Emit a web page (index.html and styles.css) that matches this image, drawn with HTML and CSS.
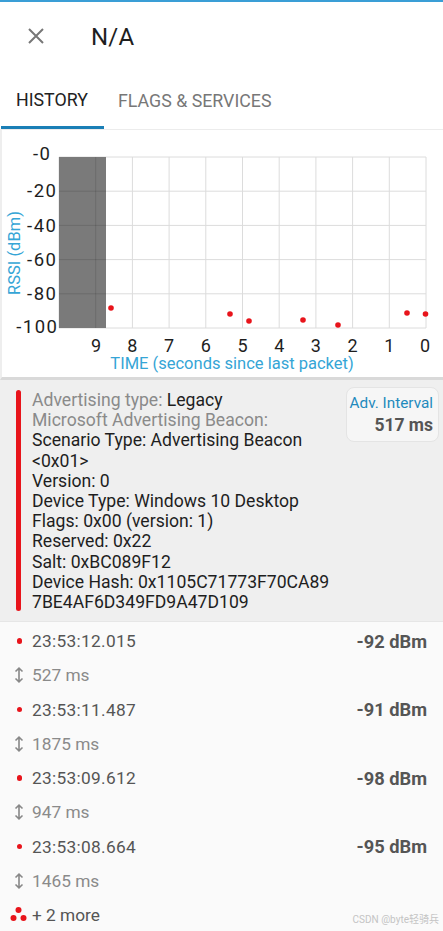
FILE: index.html
```html
<!DOCTYPE html>
<html>
<head>
<meta charset="utf-8">
<link rel="stylesheet" href="styles.css">
</head>
<body>
<div class="topline"></div>
<header class="header">
  <svg class="close" width="16" height="16" viewBox="0 0 16 16"><path d="M1 1L15 15M15 1L1 15" stroke="#777" stroke-width="2" fill="none"/></svg>
  <div class="title">N/A</div>
</header>
<nav class="tabs">
  <div class="tab active">HISTORY</div>
  <div class="tab">FLAGS &amp; SERVICES</div>
</nav>
<section class="chart">
  <svg width="443" height="247" viewBox="0 0 443 247">
    <g stroke="#dcdcdc" stroke-width="1">
      <line x1="59" y1="27" x2="426" y2="27"/>
      <line x1="59" y1="61.2" x2="426" y2="61.2"/>
      <line x1="59" y1="95.4" x2="426" y2="95.4"/>
      <line x1="59" y1="129.6" x2="426" y2="129.6"/>
      <line x1="59" y1="163.8" x2="426" y2="163.8"/>
      <line x1="59" y1="198" x2="426" y2="198"/>
      <line x1="59" y1="27" x2="59" y2="198"/>
      <line x1="95.7" y1="27" x2="95.7" y2="198"/>
      <line x1="132.4" y1="27" x2="132.4" y2="198"/>
      <line x1="169.1" y1="27" x2="169.1" y2="198"/>
      <line x1="205.8" y1="27" x2="205.8" y2="198"/>
      <line x1="242.5" y1="27" x2="242.5" y2="198"/>
      <line x1="279.2" y1="27" x2="279.2" y2="198"/>
      <line x1="315.9" y1="27" x2="315.9" y2="198"/>
      <line x1="352.6" y1="27" x2="352.6" y2="198"/>
      <line x1="389.3" y1="27" x2="389.3" y2="198"/>
      <line x1="426" y1="27" x2="426" y2="198"/>
    </g>
    <rect x="59" y="27" width="47" height="171" fill="#7a7a7a"/>
    <g stroke="rgba(0,0,0,0.12)" stroke-width="1">
      <line x1="95.7" y1="27" x2="95.7" y2="198"/>
      <line x1="59" y1="61.2" x2="106" y2="61.2"/>
      <line x1="59" y1="95.4" x2="106" y2="95.4"/>
      <line x1="59" y1="129.6" x2="106" y2="129.6"/>
      <line x1="59" y1="163.8" x2="106" y2="163.8"/>
    </g>
    <g class="ylab" text-anchor="end" dominant-baseline="central">
      <text x="51.5" y="24">-0</text>
      <text x="57.5" y="61">-20</text>
      <text x="57.5" y="96">-40</text>
      <text x="57.5" y="130">-60</text>
      <text x="57.5" y="164">-80</text>
      <text x="58.5" y="197">-100</text>
    </g>
    <g class="xlab" text-anchor="middle" dominant-baseline="central">
      <text x="96" y="215">9</text>
      <text x="132.4" y="215">8</text>
      <text x="169.1" y="215">7</text>
      <text x="205.8" y="215">6</text>
      <text x="242.5" y="215">5</text>
      <text x="279.2" y="215">4</text>
      <text x="315.9" y="215">3</text>
      <text x="352.6" y="215">2</text>
      <text x="389.3" y="215">1</text>
      <text x="425" y="215">0</text>
    </g>
    <text class="axis-title" x="232" y="233" text-anchor="middle" dominant-baseline="central">TIME (seconds since last packet)</text>
    <text class="axis-title" transform="translate(14.5 123) rotate(-90)" text-anchor="middle" dominant-baseline="central">RSSI (dBm)</text>
    <g fill="#e8141b">
      <circle cx="111" cy="178" r="2.8"/>
      <circle cx="230" cy="184" r="2.8"/>
      <circle cx="249" cy="191" r="2.8"/>
      <circle cx="303" cy="190" r="2.8"/>
      <circle cx="338" cy="195" r="2.8"/>
      <circle cx="407" cy="183" r="2.8"/>
      <circle cx="425.5" cy="184" r="2.8"/>
    </g>
  </svg>
</section>
<section class="card">
  <div class="redbar"></div>
  <div class="details">
    <div><span class="muted">Advertising type: </span>Legacy</div>
    <div class="muted">Microsoft Advertising Beacon:</div>
    <div>Scenario Type: Advertising Beacon</div>
    <div>&lt;0x01&gt;</div>
    <div>Version: 0</div>
    <div>Device Type: Windows 10 Desktop</div>
    <div>Flags: 0x00 (version: 1)</div>
    <div>Reserved: 0x22</div>
    <div>Salt: 0xBC089F12</div>
    <div>Device Hash: 0x1105C71773F70CA89</div>
    <div>7BE4AF6D349FD9A47D109</div>
  </div>
  <div class="interval">
    <div class="interval-label">Adv. Interval</div>
    <div class="interval-value">517 ms</div>
  </div>
</section>
<section class="list">
  <div class="row"><span class="dot"></span><span class="time">23:53:12.015</span><span class="rssi">-92 dBm</span></div>
  <div class="row"><svg class="arrow" width="12" height="16" viewBox="0 0 12 16"><path d="M6 1.5V14.5M2.5 4.5L6 1.2L9.5 4.5M2.5 11.5L6 14.8L9.5 11.5" stroke="#888" stroke-width="1.6" fill="none"/></svg><span class="gap">527 ms</span></div>
  <div class="row"><span class="dot"></span><span class="time">23:53:11.487</span><span class="rssi">-91 dBm</span></div>
  <div class="row"><svg class="arrow" width="12" height="16" viewBox="0 0 12 16"><path d="M6 1.5V14.5M2.5 4.5L6 1.2L9.5 4.5M2.5 11.5L6 14.8L9.5 11.5" stroke="#888" stroke-width="1.6" fill="none"/></svg><span class="gap">1875 ms</span></div>
  <div class="row"><span class="dot"></span><span class="time">23:53:09.612</span><span class="rssi">-98 dBm</span></div>
  <div class="row"><svg class="arrow" width="12" height="16" viewBox="0 0 12 16"><path d="M6 1.5V14.5M2.5 4.5L6 1.2L9.5 4.5M2.5 11.5L6 14.8L9.5 11.5" stroke="#888" stroke-width="1.6" fill="none"/></svg><span class="gap">947 ms</span></div>
  <div class="row"><span class="dot"></span><span class="time">23:53:08.664</span><span class="rssi">-95 dBm</span></div>
  <div class="row"><svg class="arrow" width="12" height="16" viewBox="0 0 12 16"><path d="M6 1.5V14.5M2.5 4.5L6 1.2L9.5 4.5M2.5 11.5L6 14.8L9.5 11.5" stroke="#888" stroke-width="1.6" fill="none"/></svg><span class="gap">1465 ms</span></div>
  <div class="row"><svg class="dots3" width="18" height="16" viewBox="0 0 18 16"><circle cx="8.5" cy="4" r="3" fill="#e8141b"/><circle cx="3.5" cy="12" r="3" fill="#e8141b"/><circle cx="13.5" cy="12" r="3" fill="#e8141b"/></svg><span class="more">+ 2 more</span></div>
  <div class="watermark">CSDN @byte轻骑兵</div>
</section>
</body>
</html>
```

FILE: styles.css
```css
* { box-sizing: border-box; }
html, body {
  margin: 0;
  padding: 0;
  width: 443px;
  height: 931px;
  overflow: hidden;
  background: #fafafa;
  font-family: Roboto, "Noto Sans", "Noto Sans CJK SC", sans-serif;
}
.topline {
  height: 2px;
  background: #3a9ed6;
}
.header {
  height: 68px;
  background: #fff;
  display: flex;
  align-items: center;
  padding-left: 28px;
  padding-top: 2px;
}
.close { display: block; margin-top: -3px; }
.title {
  margin-left: 47px;
  font-size: 24px;
  color: #1e1e1e;
  letter-spacing: 0.2px;
}
.tabs {
  height: 60px;
  background: #fff;
  display: flex;
  border-bottom: 1px solid #ececec;
}
.tab {
  display: flex;
  align-items: center;
  padding: 0 15px 0 14px;
  font-size: 17.8px;
  color: #777;
  margin-top: 2px;
}
.tab.active {
  color: #222;
  width: 103px;
  border-bottom: 3px solid #1a7fb6;
  margin-left: 1px;
  padding-left: 15px;
  padding-right: 0;
  white-space: nowrap;
}
.chart {
  height: 250px;
  background: #fff;
  border-bottom: 3px solid #d9d9d9;
  border-left: 2px solid #eeeeee;
}
.chart svg { display: block; margin-left: -2px; }
.ylab text {
  font-size: 18.5px;
  letter-spacing: 1.5px;
  fill: #1e1e1e;
}
.xlab text {
  font-size: 18px;
  fill: #1e1e1e;
}
.axis-title {
  font-size: 16.5px;
  fill: #35a5d6;
}
.card {
  background: #efefef;
  display: flex;
  align-items: flex-start;
  padding: 10px 4px 10px 16px;
  height: 242px;
  border-bottom: 1px solid #e6e6e6;
}
.redbar {
  width: 5px;
  align-self: stretch;
  background: #e8141b;
  border-radius: 3px;
}
.details {
  flex: 1;
  margin-left: 11px;
  font-size: 17.6px;
  line-height: 20.2px;
  color: #1e1e1e;
  white-space: nowrap;
}
.muted { color: #8a8a8a; }
.interval {
  margin-top: -3px;
  width: 93px;
  height: 55px;
  flex-shrink: 0;
  background: #f6f6f6;
  border: 1px solid #e4e4e4;
  border-radius: 8px;
  padding: 5px 5px 0 0;
  text-align: right;
}
.interval-label {
  font-size: 15.3px;
  color: #1f8abd;
  line-height: 20px;
  white-space: nowrap;
}
.interval-value {
  font-size: 17.5px;
  font-weight: bold;
  color: #555;
  line-height: 24px;
}
.list {
  position: relative;
  padding-top: 2px;
  background: #fafafa;
  height: 309px;
  overflow: hidden;
}
.row {
  height: 34.25px;
  display: flex;
  align-items: center;
  padding-left: 32px;
  padding-right: 16px;
  position: relative;
  font-size: 17.3px;
}
.dot {
  position: absolute;
  left: 16.5px;
  top: 14px;
  width: 5.5px;
  height: 5.5px;
  border-radius: 50%;
  background: #e8141b;
}
.time { color: #555; flex: 1; letter-spacing: 0.3px; }
.rssi { color: #555; font-weight: bold; font-size: 18.3px; }
.arrow {
  position: absolute;
  left: 13px;
  top: 9px;
}
.gap { color: #8a8a8a; }
.dots3 {
  position: absolute;
  left: 10px;
  top: 8px;
}
.more { color: #555; }
.watermark {
  position: absolute;
  right: 4px;
  top: 289px;
  font-size: 10px;
  color: #c4c4c4;
  white-space: nowrap;
}
```
